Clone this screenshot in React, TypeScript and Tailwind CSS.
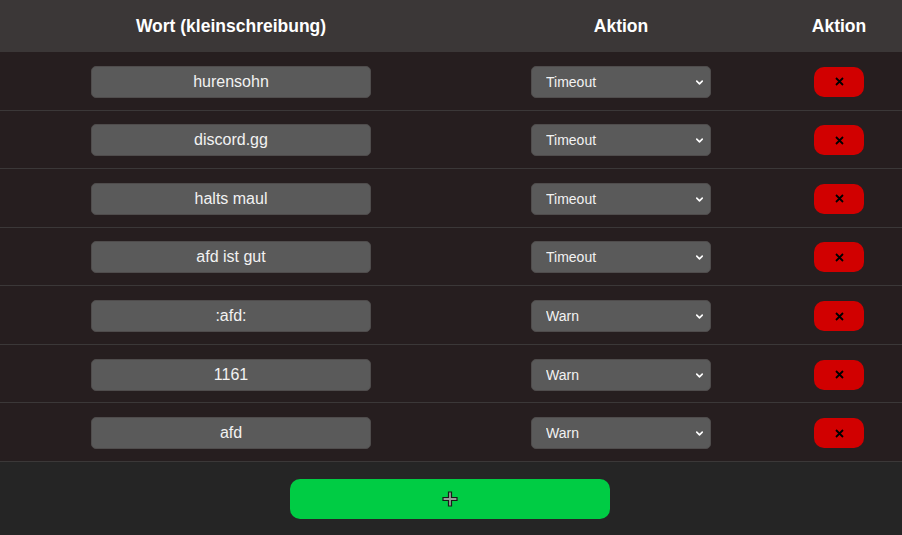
import { ChevronDown } from "lucide-react";

const rows = [
  { word: "hurensohn", action: "Timeout" },
  { word: "discord.gg", action: "Timeout" },
  { word: "halts maul", action: "Timeout" },
  { word: "afd ist gut", action: "Timeout" },
  { word: ":afd:", action: "Warn" },
  { word: "1161", action: "Warn" },
  { word: "afd", action: "Warn" },
];

function Row({ word, action }: { word: string; action: string }) {
  return (
    <div className="grid grid-cols-[462px_318px_118px_1fr] items-center h-[58.57px] pt-[2px] border-b border-[#3b3838] bg-[#261e1f]">
      <div className="flex justify-center">
        <input
          defaultValue={word}
          className="w-[280px] h-8 rounded-[5px] border border-[#4f4c4c] bg-[#5a5a5a] text-center text-base text-[#f2f2f2] outline-none"
        />
      </div>
      <div className="flex justify-center">
        <div className="relative w-[180px] h-8">
          <select
            defaultValue={action}
            className="appearance-none w-full h-full rounded-[5px] border border-[#4f4c4c] bg-[#5a5a5a] pl-[14px] text-sm text-[#f2f2f2] outline-none"
          >
            <option>Timeout</option>
            <option>Warn</option>
            <option>Kick</option>
            <option>Ban</option>
          </select>
          <ChevronDown
            className="absolute right-[6px] top-[11px] w-[11px] h-[11px] text-white pointer-events-none"
            strokeWidth={3.5}
          />
        </div>
      </div>
      <div className="flex justify-center">
        <button className="w-[50px] h-[30px] rounded-[10px] bg-[#d10000] flex items-center justify-center">
          <svg width="9" height="9" viewBox="0 0 9 9">
            <path d="M1 1 L8 8 M8 1 L1 8" stroke="#000" strokeWidth="1.8" />
          </svg>
        </button>
      </div>
      <div />
    </div>
  );
}

export default function App() {
  return (
    <div className="w-[902px] h-[535px] bg-[#252525] font-['Liberation_Sans',Arial,sans-serif]">
      <div className="grid grid-cols-[462px_318px_118px_1fr] items-center h-[52px] bg-[#3b3737] text-white font-bold text-[17.5px]">
        <div className="text-center">Wort (kleinschreibung)</div>
        <div className="text-center">Aktion</div>
        <div className="text-center">Aktion</div>
        <div />
      </div>
      {rows.map((r) => (
        <Row key={r.word} word={r.word} action={r.action} />
      ))}
      <div className="w-[900px] flex justify-center pt-[17px]">
        <button className="w-[320px] h-10 rounded-[10px] bg-[#00cc44] flex items-center justify-center">
          <svg width="16" height="16" viewBox="0 0 16 16">
            <path
              d="M6.5 1 H9.5 V6.5 H15 V9.5 H9.5 V15 H6.5 V9.5 H1 V6.5 H6.5 Z"
              fill="#9a9a9a"
              stroke="#1a1a1a"
              strokeWidth="1.2"
            />
          </svg>
        </button>
      </div>
    </div>
  );
}
